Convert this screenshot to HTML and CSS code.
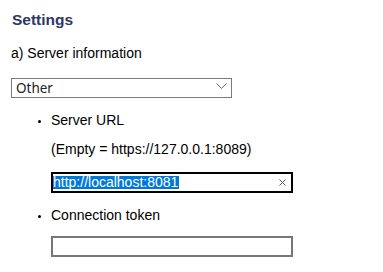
FILE: index.html
```html
<!DOCTYPE html>
<html lang="en">
<head>
  <meta charset="UTF-8" />
  <title>Settings</title>
  <link rel="stylesheet" href="styles.css">
</head>
<body>

  <h2 class="title">Settings</h2>
  <p class="group-label">a) Server information</p>

  <div class="select-wrap">
    <select class="select">
      <option>Other</option>
      <option>Local</option>
    </select>
    <svg class="chevron" width="11" height="6" viewBox="0 0 11 6">
      <path d="M0.5 0.5 L5.5 5.5 L10.5 0.5" fill="none" stroke="#6b6b6b" stroke-width="1" />
    </svg>
  </div>

  <ul class="options">
    <li>
      <div class="opt-label">Server URL</div>
      <div class="hint">(Empty = https://127.0.0.1:8089)</div>
      <div class="field focused">
        <span class="sel">http://localhost:8081</span>
        <svg class="clear" width="7" height="7" viewBox="0 0 7 7">
          <path d="M0.5 0.5 L6.5 6.5 M6.5 0.5 L0.5 6.5" stroke="#555" stroke-width="1" />
        </svg>
      </div>
    </li>
    <li class="second">
      <div class="opt-label">Connection token</div>
      <div class="field token"></div>
    </li>
  </ul>

</body>
</html>
```

FILE: styles.css
```css
body {
  margin: 0;
  padding: 0 11px;
  font-family: "Liberation Sans", Arial, sans-serif;
  font-size: 14px;
  color: #000;
  background: #fff;
}

.title {
  margin: 11px 0 0;
  padding-left: 1px;
  font-size: 15.5px;
  line-height: 17px;
  font-weight: bold;
  color: #2b3766;
}

.group-label {
  margin: 17px 0 0;
  line-height: 16px;
}

.select-wrap {
  position: relative;
  margin-top: 17px;
  width: 221px;
  height: 20px;
}

.select {
  appearance: none;
  -webkit-appearance: none;
  box-sizing: border-box;
  width: 100%;
  height: 100%;
  margin: 0;
  padding: 0 0 0 4px;
  border: 1px solid #7a7a7a;
  border-radius: 0;
  background: #fff;
  font-family: "Noto Sans", "Open Sans", sans-serif;
  font-size: 13.5px;
  color: #222;
}

.chevron {
  position: absolute;
  right: 5px;
  top: 5px;
  pointer-events: none;
}

.options {
  margin: 14px 0 0;
  padding-left: 40px;
}

.options li {
  line-height: 16px;
}

.options li::marker {
  font-size: 10px;
}

.options li.second {
  margin-top: 14px;
}

.hint {
  margin-top: 13px;
}

.field {
  box-sizing: border-box;
  width: 242px;
  height: 21px;
  border: 2px solid #777;
  background: #fff;
  display: flex;
  align-items: center;
  justify-content: space-between;
  padding: 0 5px 0 0;
}

.focused {
  margin-top: 15px;
  border-color: #000;
}

.token {
  margin-top: 13px;
}

.sel {
  flex: none;
  padding-right: 1px;
  background: #0078d7;
  color: #fff;
  font-size: 14px;
  line-height: 13px;
  height: 13px;
}
```
